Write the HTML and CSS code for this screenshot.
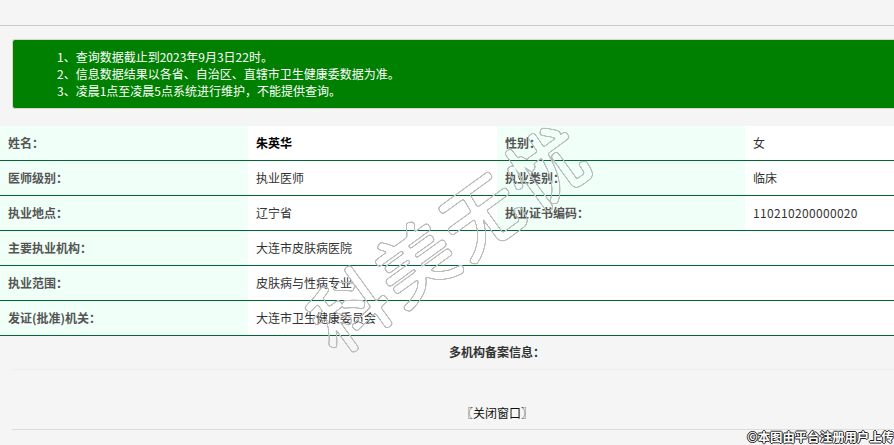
FILE: index.html
```html
<!DOCTYPE html>
<html lang="zh-CN">
<head>
<meta charset="utf-8">
<title>执业信息查询</title>
<link rel="stylesheet" href="styles.css">
</head>
<body>
<div class="page">
  <div class="top-rule"></div>
  <div class="notice">
    <ol class="notice-list">
      <li>1、查询数据截止到2023年9月3日22时。</li>
      <li>2、信息数据结果以各省、自治区、直辖市卫生健康委数据为准。</li>
      <li>3、凌晨1点至凌晨5点系统进行维护，不能提供查询。</li>
    </ol>
  </div>
  <table class="info">
    <tr><th>姓名：</th><td class="strong">朱英华</td><th>性别：</th><td>女</td></tr>
    <tr><th>医师级别：</th><td>执业医师</td><th>执业类别：</th><td>临床</td></tr>
    <tr><th>执业地点：</th><td>辽宁省</td><th>执业证书编码：</th><td class="num">110210200000020</td></tr>
    <tr><th>主要执业机构：</th><td colspan="3">大连市皮肤病医院</td></tr>
    <tr><th>执业范围：</th><td colspan="3">皮肤病与性病专业</td></tr>
    <tr><th>发证(批准)机关：</th><td colspan="3">大连市卫生健康委员会</td></tr>
  </table>
  <div class="multi">多机构备案信息：</div>
  <div class="close"><a class="close-link">〖关闭窗口〗</a></div>
</div>
<svg class="stamp" width="894" height="445" viewBox="0 0 894 445">
  <defs>
    <filter id="ring" x="-10%" y="-10%" width="120%" height="120%" color-interpolation-filters="sRGB">
      <feGaussianBlur in="SourceAlpha" stdDeviation="1.2" result="soft"/>
      <feComponentTransfer in="soft" result="outer">
        <feFuncA type="linear" slope="10" intercept="-0.8"/>
      </feComponentTransfer>
      <feComponentTransfer in="soft" result="inner">
        <feFuncA type="linear" slope="10" intercept="-4.2"/>
      </feComponentTransfer>
      <feComposite in="outer" in2="inner" operator="out" result="line"/>
      <feFlood flood-color="#bcbcbc"/>
      <feComposite in2="line" operator="in"/>
    </filter>
  </defs>
  <g class="stamp-group">
    <text class="stamp-text" x="0" y="0" transform="translate(448 234) rotate(-36)" text-anchor="middle" dominant-baseline="central">科美无忧</text>
  </g>
</svg>
<div class="credit">©本图由平台注册用户上传</div>
</body>
</html>
```
FILE: styles.css
```css
html, body {
  margin: 0;
  padding: 0;
  height: 445px;
  overflow: hidden;
}
body {
  position: relative;
  background: #f5f5f5;
  color: #333;
  font: 12px/17px "Noto Sans CJK SC", "Liberation Sans", sans-serif;
}
.page {
  width: 994px;
}
.top-rule {
  height: 25px;
  border-bottom: 1px solid #ccc;
}
.notice {
  margin: 13px 0 17px 12px;
  height: 68px;
  border: 1px solid #ddd6c8;
  border-radius: 3px;
  background: #008000;
  color: #fff;
}
.notice-list {
  list-style: none;
  margin: 0;
  padding: 8px 0 0 44px;
}
.info {
  width: 994px;
  table-layout: fixed;
  border-collapse: collapse;
  background: #fff;
}
.info th,
.info td {
  height: 32px;
  padding: 0 8px 2px;
  text-align: left;
  border-bottom: 1px solid #006633;
}
.info th {
  width: 232px;
  background: #f0fff8;
  color: #555;
  font-weight: bold;
}
.info .strong {
  color: #000;
  font-weight: bold;
}
.info .num {
  letter-spacing: 0.33px;
}
.multi {
  margin: 0 12px;
  height: 33px;
  line-height: 32px;
  border-bottom: 1px solid #eee;
  text-align: center;
  font-weight: bold;
}
.close {
  margin: 0 12px;
  height: 59px;
  border-bottom: 1px solid #ddd;
  line-height: 86px;
  text-align: center;
  color: #111;
}
.stamp {
  position: absolute;
  left: 0;
  top: 0;
  pointer-events: none;
}
.stamp-group {
  filter: url(#ring);
}
.stamp-text {
  font-size: 76px;
  font-weight: 300;
  letter-spacing: 5px;
  fill: #000;
  stroke: #000;
  stroke-width: 3px;
  stroke-linejoin: round;
}
.credit {
  position: absolute;
  right: 0;
  bottom: -1px;
  font-size: 12.4px;
  color: #fff;
  font-weight: bold;
  text-shadow: 1px 0 #222, -1px 0 #222, 0 1px #222, 0 -1px #222;
  white-space: nowrap;
}
```
